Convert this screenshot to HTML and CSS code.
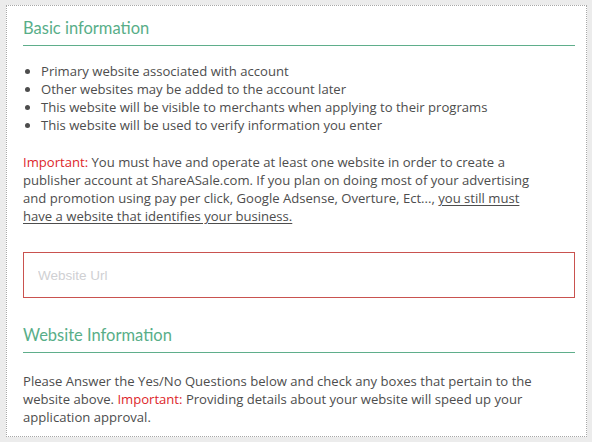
FILE: index.html
```html
<!DOCTYPE html>
<html>
<head>
<meta charset="utf-8">
<link rel="stylesheet" href="styles.css">
</head>
<body>
<div class="panel">
  <h2 class="section-title">Basic information</h2>
  <ul class="points">
    <li>Primary website associated with account</li>
    <li>Other websites may be added to the account later</li>
    <li>This website will be visible to merchants when applying to their programs</li>
    <li>This website will be used to verify information you enter</li>
  </ul>
  <p class="note"><span class="imp">Important:</span> You must have and operate at least one website in order to create a publisher account at ShareASale.com. If you plan on doing most of your advertising and promotion using pay per click, Google Adsense, Overture, Ect..., <u>you still must have a website that identifies your business.</u></p>
  <input class="url" type="text" placeholder="Website Url">
  <h2 class="section-title second">Website Information</h2>
  <p class="note last">Please Answer the Yes/No Questions below and check any boxes that pertain to the website above. <span class="imp">Important:</span> Providing details about your website will speed up your application approval.</p>
</div>
</body>
</html>
```
FILE: styles.css
```css
html, body {
  margin: 0;
  padding: 0;
}
body {
  background: #ececec;
  padding: 5px 5px 5px 6px;
  width: 592px;
  height: 442px;
  box-sizing: border-box;
  font-family: "Open Sans", "DejaVu Sans", sans-serif;
  font-size: 13.1px;
  color: #4d4d4d;
}
.panel {
  background: #fff;
  border: 1px dotted #a8a8a8;
  height: 432px;
  box-sizing: border-box;
  padding: 12px 11px 0 16px;
  overflow: hidden;
}
.section-title {
  margin: 0;
  font-family: "Lato", "Questrial", sans-serif;
  font-weight: normal;
  font-size: 16.5px;
  line-height: 20px;
  color: #58ae88;
  padding-bottom: 7px;
  border-bottom: 1px solid #5fae8b;
}
.section-title.second {
  margin-top: 27px;
}
.points {
  margin: 16px 0 0;
  padding-left: 18px;
  line-height: 18px;
}
.note {
  margin: 19px 0 0;
  line-height: 18px;
  max-width: 522px;
}
.note.last {
  margin-top: 19px;
}
.imp {
  color: #dd1f2a;
}
u {
  text-decoration-thickness: 1px;
  text-underline-offset: 2px;
}
.url {
  display: block;
  box-sizing: border-box;
  width: 100%;
  height: 46px;
  margin-top: 27px;
  border: 1px solid #c9524f;
  background: #fff;
  padding: 0 14px;
  font-family: "Liberation Sans", Arial, sans-serif;
  font-size: 13.5px;
  outline: none;
}
.url::placeholder {
  color: #cfd0d3;
}
```
